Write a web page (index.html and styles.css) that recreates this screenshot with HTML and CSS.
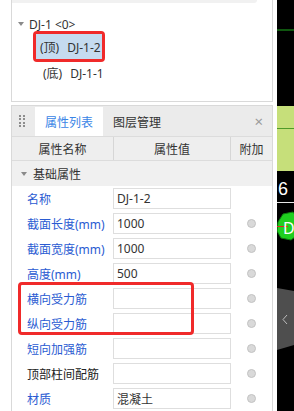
FILE: index.html
```html
<!DOCTYPE html>
<html lang="zh-CN">

<head>
    <meta charset="UTF-8">
    <meta name="viewport" content="width=device-width, initial-scale=1.0">
    <title>构件属性</title>
    <link rel="stylesheet" href="styles.css">
</head>

<body>
    <div class="app">
        <aside class="sidebar">
            <!-- 构件树 -->
            <section class="tree-panel">
                <div class="tree-topbar"></div>
                <div class="tree-node root"><span class="caret"></span>DJ-1 &lt;0&gt;</div>
                <div class="tree-node child selected">
                    <span class="mark"><span class="label">(顶)<i class="sp"></i>DJ-1-2</span></span>
                </div>
                <div class="tree-node child">(底)<i class="sp"></i>DJ-1-1</div>
            </section>

            <!-- 属性面板 -->
            <section class="prop-panel">
                <div class="tabs">
                    <span class="grip"><i></i><i></i><i></i><i></i><i></i><i></i><i></i><i></i></span>
                    <span class="tab active">属性列表</span>
                    <span class="tab">图层管理</span>
                    <span class="close">×</span>
                </div>
                <div class="grid-head">
                    <div class="cell">属性名称</div>
                    <div class="cell mid">属性值</div>
                    <div class="cell">附加</div>
                </div>
                <div class="group-row"><span class="caret"></span>基础属性</div>

                <div class="rows">
                    <div class="row">
                        <div class="name">名称</div>
                        <div class="value">DJ-1-2</div>
                        <div class="extra"></div>
                    </div>
                    <div class="row">
                        <div class="name">截面长度(mm)</div>
                        <div class="value">1000</div>
                        <div class="extra"><span class="dot"></span></div>
                    </div>
                    <div class="row">
                        <div class="name">截面宽度(mm)</div>
                        <div class="value">1000</div>
                        <div class="extra"><span class="dot"></span></div>
                    </div>
                    <div class="row">
                        <div class="name">高度(mm)</div>
                        <div class="value">500</div>
                        <div class="extra"><span class="dot"></span></div>
                    </div>
                    <div class="row">
                        <div class="name">横向受力筋</div>
                        <div class="value"></div>
                        <div class="extra"><span class="dot"></span></div>
                    </div>
                    <div class="row">
                        <div class="name">纵向受力筋</div>
                        <div class="value"></div>
                        <div class="extra"><span class="dot"></span></div>
                    </div>
                    <div class="row">
                        <div class="name">短向加强筋</div>
                        <div class="value"></div>
                        <div class="extra"><span class="dot"></span></div>
                    </div>
                    <div class="row">
                        <div class="name plain">顶部柱间配筋</div>
                        <div class="value"></div>
                        <div class="extra"><span class="dot"></span></div>
                    </div>
                    <div class="row">
                        <div class="name">材质</div>
                        <div class="value">混凝土</div>
                        <div class="extra"><span class="dot"></span></div>
                    </div>

                    <!-- 红框标注 -->
                    <div class="annot"></div>
                </div>
            </section>
        </aside>

        <!-- 绘图区（右侧截断） -->
        <div class="viewport">
            <div class="vp-line"></div>
            <div class="vp-block"></div>
            <div class="vp-digit">6</div>
            <div class="vp-rule"></div>
            <svg class="vp-draw" width="17" height="411" viewBox="0 0 17 411">
                <polygon points="1,222 6,214 16,212 22,220 22,234 14,240 4,238 0,231" fill="#1fcf1f" stroke="#0c7a0c" stroke-width="1"/>
                <line x1="0" y1="226.5" x2="11" y2="226.5" stroke="#e42424" stroke-width="1"/>
                <text x="6" y="234" fill="#fff" font-family="Noto Sans, sans-serif" font-size="16">D</text>
                <polygon points="0,288 17,291 17,345 0,350" fill="#4e4e4e"/>
                <polyline points="10,315 6,319.5 10,324" fill="none" stroke="#bdbdbd" stroke-width="1"/>
            </svg>
        </div>
    </div>
</body>

</html>
```

FILE: styles.css
```css
:root {
    --border: #d9d9d9;
    --label-blue: #2a5bd2;
    --tab-blue: #3a85e6;
    --annot-red: #f02a2a;
}

* {
    box-sizing: border-box;
}

body {
    margin: 0;
    width: 294px;
    height: 411px;
    overflow: hidden;
    background: #fff;
    color: #333;
    font-family: "Noto Sans", "Noto Sans CJK SC", sans-serif;
    font-size: 12px;
}

.app {
    display: flex;
    height: 411px;
}

.sidebar {
    width: 277px;
    flex: none;
    padding: 0 4px 0 11px;
    display: flex;
    flex-direction: column;
    gap: 3px;
    background: #fff;
}

/* ---------- 构件树 ---------- */
.tree-panel {
    height: 102px;
    flex: none;
    border: 1px solid var(--border);
    border-top: none;
    display: flex;
    flex-direction: column;
}

.tree-topbar {
    width: 245px;
    height: 3px;
    background: #f1f1f1;
    border-bottom-right-radius: 6px;
    margin-bottom: 10px;
}

.tree-node {
    display: flex;
    align-items: center;
    height: 22px;
    white-space: nowrap;
}

.tree-node .sp {
    display: inline-block;
    width: 8px;
}

.tree-node.root {
    padding-left: 6px;
}

.caret {
    width: 0;
    height: 0;
    border-left: 3px solid transparent;
    border-right: 3px solid transparent;
    border-top: 4px solid #8a8a8a;
    margin-right: 5px;
}

.tree-node.child {
    padding-left: 31px;
}

.tree-node.selected {
    height: 31px;
    margin-top: -4px;
    padding-left: 21px;
}

.mark {
    display: flex;
    height: 31px;
    border: 3px solid var(--annot-red);
    border-radius: 4px;
}

.mark .label {
    display: flex;
    align-items: center;
    padding: 1px 1px 0 4px;
    background: #c5dbf0;
}

/* ---------- 属性面板 ---------- */
.prop-panel {
    flex: 1;
    border: 1px solid var(--border);
    border-bottom: none;
    display: flex;
    flex-direction: column;
}

.tabs {
    height: 30px;
    flex: none;
    display: flex;
    align-items: flex-end;
    background: #ebebeb;
}

.grip {
    display: grid;
    grid-template-columns: 2px 2px;
    grid-auto-rows: 2px;
    gap: 1.5px 2px;
    width: 23px;
    height: 100%;
    align-content: center;
    padding-left: 7px;
}

.grip i {
    background: #8d8d8d;
}

.tab {
    height: 29px;
    display: flex;
    align-items: center;
    padding: 0 10px;
}

.tab.active {
    background: #fff;
    color: var(--tab-blue);
}

.close {
    margin-left: auto;
    height: 100%;
    display: flex;
    align-items: center;
    padding-right: 9px;
    color: #9a9a9a;
    font-size: 15px;
}

.grid-head {
    height: 25px;
    flex: none;
    display: grid;
    grid-template-columns: 101px 118px 41px;
    background: #eeeeee;
    border-top: 1px solid #dcdcdc;
    border-bottom: 1px solid #dcdcdc;
}

.grid-head .cell {
    display: flex;
    align-items: center;
    justify-content: center;
}

.grid-head .mid {
    border-left: 1px solid #d6d6d6;
    border-right: 1px solid #d6d6d6;
}

.group-row {
    height: 25px;
    flex: none;
    display: flex;
    align-items: center;
    padding-left: 9px;
    background: #f0f0f0;
}

.group-row .caret {
    margin-right: 6px;
}

.rows {
    position: relative;
}

.row {
    height: 25px;
    display: grid;
    grid-template-columns: 101px 118px 41px;
    align-items: center;
}

.name {
    padding-left: 15px;
    color: var(--label-blue);
    white-space: nowrap;
}

.name.plain {
    color: #222;
}

.value {
    height: 21px;
    border: 1px solid #dedede;
    padding-left: 3px;
    display: flex;
    align-items: center;
    color: #333;
}

.extra {
    display: flex;
    justify-content: center;
}

.dot {
    width: 9px;
    height: 9px;
    border-radius: 50%;
    background: #d9d9d9;
    border: 1px solid #c3c3c3;
}

.annot {
    position: absolute;
    left: 6px;
    top: 96px;
    width: 176px;
    height: 53px;
    border: 3px solid var(--annot-red);
    border-radius: 4px;
}

/* ---------- 绘图区 ---------- */
.viewport {
    flex: 1;
    position: relative;
    overflow: hidden;
    background: #000;
}

.vp-line {
    position: absolute;
    left: 0;
    right: 0;
    top: 29px;
    height: 2px;
    background: #0f560f;
}

.vp-block {
    position: absolute;
    left: 0;
    right: 0;
    top: 106px;
    height: 65px;
    background: linear-gradient(#c6df7a 0 22px, #4f9a2a 22px 23px, #c6df7a 23px);
}

.vp-digit {
    position: absolute;
    left: 1px;
    top: 179px;
    color: #fff;
    font-family: "Liberation Sans", sans-serif;
    font-size: 18px;
    line-height: 20px;
}

.vp-rule {
    position: absolute;
    left: 0;
    right: 0;
    top: 202px;
    height: 1px;
    background: #e6e6e6;
}

.vp-draw {
    position: absolute;
    left: 0;
    top: 0;
}
```
